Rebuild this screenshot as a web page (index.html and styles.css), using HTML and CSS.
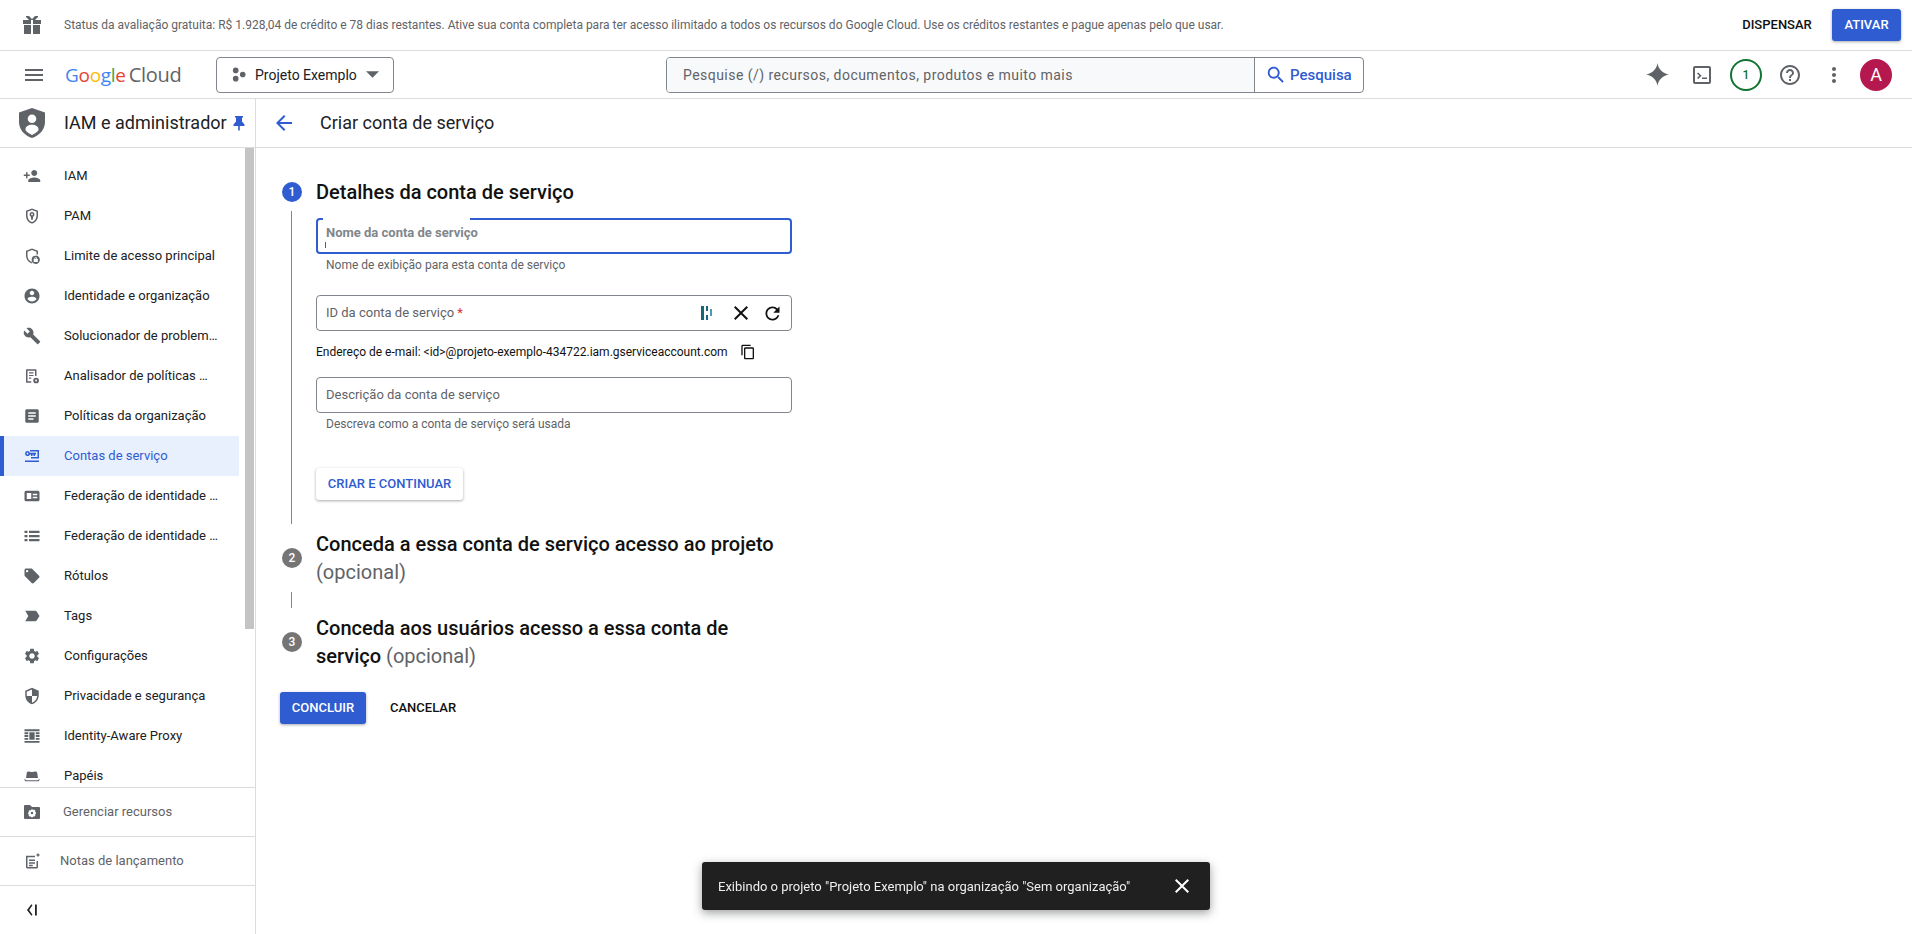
FILE: index.html
```html
<!DOCTYPE html>
<html lang="pt-BR">
<head>
<meta charset="utf-8">
<title>Criar conta de serviço</title>
<link rel="stylesheet" href="styles.css">
</head>
<body>
<div class="banner">
  <svg class="banner-gift" viewBox="0 0 18 18"><path d="M0 4h8v4H0zM10 4h8v4h-8zM1 9h7v9H1zM10 9h7v9h-7zM3 0h3l3 3 3-3h3v1l-3 3H6L3 1z"/></svg>
  <p class="banner-text">Status da avaliação gratuita: R$ 1.928,04 de crédito e 78 dias restantes. Ative sua conta completa para ter acesso ilimitado a todos os recursos do Google Cloud. Use os créditos restantes e pague apenas pelo que usar.</p>
  <button class="btn btn-text banner-dismiss">DISPENSAR</button>
  <button class="btn btn-primary banner-activate">ATIVAR</button>
</div>

<header class="topbar">
  <svg class="menu-icon" viewBox="0 0 24 24"><path d="M3 18h18v-2H3v2zm0-5h18v-2H3v2zm0-7v2h18V6H3z"/></svg>
  <div class="logo"><span class="g-blue">G</span><span class="g-red">o</span><span class="g-yellow">o</span><span class="g-blue">g</span><span class="g-green">l</span><span class="g-red">e</span><span class="logo-cloud">Cloud</span></div>
  <button class="project">
    <svg class="project-dots" viewBox="0 0 16 16"><circle cx="5" cy="3.600" r="3"/><circle cx="5" cy="12.400" r="3"/><circle cx="12.500" cy="8" r="3"/></svg>
    <span>Projeto Exemplo</span>
    <svg class="project-caret" viewBox="0 0 12 6"><path d="M0 0h12L6 6z"/></svg>
  </button>
  <div class="search">
    <div class="search-field">Pesquise (/) recursos, documentos, produtos e muito mais</div>
    <div class="search-btn">
      <svg viewBox="0 0 24 24"><path d="M15.500 14h-.79l-.28-.27C15.410 12.590 16 11.110 16 9.500 16 5.910 13.090 3 9.500 3S3 5.910 3 9.500 5.910 16 9.500 16c1.610 0 3.090-.59 4.230-1.570l.27.28v.79l5 4.990L20.490 19l-4.990-5zm-6 0C7.010 14 5 11.990 5 9.500S7.010 5 9.500 5 14 7.010 14 9.500 11.990 14 9.500 14z"/></svg>
      <span>Pesquisa</span>
    </div>
  </div>
  <div class="top-actions">
    <svg class="act act-spark" viewBox="0 0 24 24"><path d="M12 0c.9 6.300 5.200 10.900 12 12-6.800 1.100-11.100 5.700-12 12-.9-6.300-5.200-10.900-12-12C6.800 10.900 11.100 6.300 12 0z"/></svg>
    <svg class="act act-shell" viewBox="0 0 18 18"><path fill-rule="evenodd" d="M2 0h14a2 2 0 0 1 2 2v14a2 2 0 0 1-2 2H2a2 2 0 0 1-2-2V2a2 2 0 0 1 2-2zm0 2v14h14V2zm2 5.500L5.200 6.500 8.600 9.700 5.200 13 4 12l2.300-2.300zM9 11.500h5V13H9z"/></svg>
    <div class="act-badge">1</div>
    <svg class="act act-help" viewBox="0 0 24 24"><path d="M11 18h2v-2h-2v2zm1-16C6.480 2 2 6.480 2 12s4.480 10 10 10 10-4.480 10-10S17.520 2 12 2zm0 18c-4.410 0-8-3.590-8-8s3.590-8 8-8 8 3.590 8 8-3.590 8-8 8zm0-14c-2.210 0-4 1.790-4 4h2c0-1.100.9-2 2-2s2 .9 2 2c0 2-3 1.750-3 5h2c0-2.250 3-2.500 3-5 0-2.210-1.790-4-4-4z"/></svg>
    <svg class="act act-more" viewBox="0 0 24 24"><path d="M12 8c1.100 0 2-.9 2-2s-.9-2-2-2-2 .9-2 2 .9 2 2 2zm0 2c-1.100 0-2 .9-2 2s.9 2 2 2 2-.9 2-2-.9-2-2-2zm0 6c-1.100 0-2 .9-2 2s.9 2 2 2 2-.9 2-2-.9-2-2-2z"/></svg>
    <div class="avatar">A</div>
  </div>
</header>

<div class="shell">
  <aside class="sidebar">
    <div class="side-head">
      <svg class="side-shield" viewBox="0 0 26 30"><path fill-rule="evenodd" d="M13 0l13 4.500V14c0 7.500-5.500 13.500-13 16C5.500 27.500 0 21.500 0 14V4.500zm0 6.500a4.300 4.300 0 1 0 0 8.600 4.300 4.300 0 0 0 0-8.600zm0 10.300c-3.800 0-6.500 2-6.500 4.200v1.300c1.700 2 4 3.700 6.500 4.700 2.500-1 4.800-2.700 6.500-4.700V21c0-2.200-2.700-4.200-6.500-4.200z"/></svg>
      <span class="side-title">IAM e administrador</span>
      <svg class="side-pin" viewBox="0 0 12 15"><path d="M2 0h8v1.500H9V5.500l2.500 3V10H6.800v4L6 15l-.8-1v-4H.5V8.500L3 5.500V1.500H2z"/></svg>
    </div>
    <div class="nav-wrap">
      <nav class="nav">
        <a class="nav-item"><svg viewBox="0 0 24 24"><path d="M15 12c2.210 0 4-1.790 4-4s-1.790-4-4-4-4 1.790-4 4 1.790 4 4 4zm-9-2V7H4v3H1v2h3v3h2v-3h3v-2H6zm9 4c-2.670 0-8 1.340-8 4v2h16v-2c0-2.660-5.330-4-8-4z"/></svg><span>IAM</span></a>
        <a class="nav-item"><svg viewBox="0 0 24 24"><path fill-rule="evenodd" d="M12 2l8 3v6.500c0 4.900-3.300 9.300-8 10.500-4.700-1.200-8-5.600-8-10.500V5zm0 2.100L6 6.400v5.100c0 3.900 2.500 7.300 6 8.400 3.500-1.100 6-4.500 6-8.400V6.400zM12 6.500a3.400 3.400 0 0 1 1.500 6.400l-.4 4.100h-2.200l-.4-4.100A3.400 3.400 0 0 1 12 6.500zm0 2.200a1.200 1.200 0 1 0 0 2.400 1.200 1.200 0 0 0 0-2.400z"/></svg><span>PAM</span></a>
        <a class="nav-item"><svg viewBox="0 0 24 24"><path d="M12 2l8 3v5h-2V6.400l-6-2.300-6 2.300v5.100c0 3.800 2.300 7 5.500 8.200l.8 2.200h-.3c-4.700-1.200-8-5.600-8-10.500V5z"/><path fill-rule="evenodd" d="M17 11.500a5.500 5.500 0 1 1 0 11 5.500 5.500 0 0 1 0-11zm0 2a1.800 1.800 0 0 0-1.800 1.800v.7h-1v4h5.600v-4h-1v-.7A1.800 1.800 0 0 0 17 13.500zm0 1.300c.4 0 .7.300.7.700v.5h-1.400v-.5c0-.4.300-.7.700-.7z"/></svg><span>Limite de acesso principal</span></a>
        <a class="nav-item"><svg viewBox="0 0 24 24"><path d="M12 2C6.480 2 2 6.480 2 12s4.480 10 10 10 10-4.480 10-10S17.520 2 12 2zm0 3c1.660 0 3 1.340 3 3s-1.340 3-3 3-3-1.340-3-3 1.340-3 3-3zm0 14.200c-2.500 0-4.710-1.280-6-3.220.03-1.990 4-3.080 6-3.080 1.990 0 5.970 1.090 6 3.080-1.290 1.940-3.500 3.220-6 3.220z"/></svg><span>Identidade e organização</span></a>
        <a class="nav-item"><svg viewBox="0 0 24 24"><path d="M22.700 19l-9.100-9.100c.9-2.300.4-5-1.500-6.900-2-2-5-2.400-7.400-1.300L9 6 6 9 1.600 4.700C.4 7.100.9 10.100 2.900 12.100c1.900 1.900 4.600 2.400 6.900 1.500l9.100 9.100c.4.4 1 .4 1.400 0l2.300-2.300c.5-.4.5-1.100.1-1.400z"/></svg><span>Solucionador de problem…</span></a>
        <a class="nav-item"><svg viewBox="0 0 24 24"><path d="M5 3h12a1 1 0 0 1 1 1v8h-2V5H6v14h5v2H5a1 1 0 0 1-1-1V4a1 1 0 0 1 1-1zm3 4h6v1.600H8zm0 3.500h6v1.600H8zM8 14h3v1.600H8z"/><path fill-rule="evenodd" d="M17.500 14.200a3.800 3.800 0 1 1 0 7.600 3.800 3.800 0 0 1 0-7.600zm0 2.600a1.200 1.200 0 1 0 0 2.400 1.200 1.200 0 0 0 0-2.400z"/></svg><span>Analisador de políticas …</span></a>
        <a class="nav-item"><svg viewBox="0 0 24 24"><path d="M19 3H5c-1.100 0-2 .9-2 2v14c0 1.100.9 2 2 2h14c1.100 0 2-.9 2-2V5c0-1.100-.9-2-2-2zm-5 14H7v-2h7v2zm3-4H7v-2h10v2zm0-4H7V7h10v2z"/></svg><span>Políticas da organização</span></a>
        <a class="nav-item nav-active"><svg viewBox="0 0 14 12"><path fill-rule="evenodd" d="M0 10.500h14V12H0zM5 0h9v8.500H6V7h6.500V1.500H5zM2.500 1a2.500 2.500 0 0 1 2.400 1.800H11v1.600h-1V6H8.500V4.400h-1V6H6V4.400H4.900A2.500 2.500 0 1 1 2.500 1zm0 1.600a.9.9 0 1 0 0 1.800.9.9 0 0 0 0-1.800z"/></svg><span>Contas de serviço</span></a>
        <a class="nav-item"><svg viewBox="0 0 24 24"><path fill-rule="evenodd" d="M4 5h16a2 2 0 0 1 2 2v10a2 2 0 0 1-2 2H4a2 2 0 0 1-2-2V7a2 2 0 0 1 2-2zm1 3v8h6V8zm8 1v2h6V9zm0 4v2h6v-2z"/></svg><span>Federação de identidade …</span></a>
        <a class="nav-item"><svg viewBox="0 0 24 24"><path d="M2 5h4v3H2zm6 0h14v3H8zM2 10.500h4v3H2zm6 0h14v3H8zM2 16h4v3H2zm6 0h14v3H8z"/></svg><span>Federação de identidade …</span></a>
        <a class="nav-item"><svg viewBox="0 0 24 24"><path d="M21.410 11.580l-9-9C12.050 2.220 11.550 2 11 2H4c-1.100 0-2 .9-2 2v7c0 .55.22 1.050.59 1.420l9 9c.36.36.86.58 1.410.58.55 0 1.050-.22 1.410-.59l7-7c.37-.36.59-.86.59-1.410 0-.55-.23-1.060-.59-1.420zM5.500 7C4.670 7 4 6.330 4 5.500S4.670 4 5.500 4 7 4.670 7 5.500 6.330 7 5.500 7z"/></svg><span>Rótulos</span></a>
        <a class="nav-item"><svg viewBox="0 0 24 24"><path d="M3 5h13.500c.7 0 1.300.3 1.700.9L22 12l-3.800 6.100c-.4.6-1 .9-1.700.9H3l4-7z"/></svg><span>Tags</span></a>
        <a class="nav-item"><svg viewBox="0 0 24 24"><path d="M19.140 12.940c.04-.3.06-.61.06-.94 0-.32-.02-.64-.07-.94l2.030-1.580c.18-.14.23-.41.12-.61l-1.920-3.320c-.12-.22-.37-.29-.59-.22l-2.390.96c-.5-.38-1.030-.7-1.620-.94l-.36-2.540c-.04-.24-.24-.41-.48-.41h-3.840c-.24 0-.43.17-.47.41l-.36 2.540c-.59.24-1.130.57-1.620.94l-2.390-.96c-.22-.08-.47 0-.59.22L2.740 8.870c-.12.21-.08.47.12.61l2.030 1.580c-.05.3-.09.63-.09.94s.02.64.07.94l-2.030 1.580c-.18.14-.23.41-.12.61l1.920 3.320c.12.22.37.29.59.22l2.390-.96c.5.38 1.030.7 1.620.94l.36 2.540c.05.24.24.41.48.41h3.840c.24 0 .44-.17.47-.41l.36-2.540c.59-.24 1.130-.56 1.620-.94l2.390.96c.22.08.47 0 .59-.22l1.920-3.320c.12-.22.07-.47-.12-.61l-2.010-1.580zM12 15.600c-1.980 0-3.600-1.620-3.600-3.600s1.620-3.600 3.600-3.600 3.600 1.620 3.600 3.600-1.620 3.600-3.600 3.600z"/></svg><span>Configurações</span></a>
        <a class="nav-item"><svg viewBox="0 0 24 24"><path d="M12 1L3 5v6c0 5.550 3.840 10.740 9 12 5.160-1.260 9-6.450 9-12V5l-9-4zm0 10.990h7c-.53 4.120-3.280 7.790-7 8.940V12H5V6.300l7-3.110v8.800z"/></svg><span>Privacidade e segurança</span></a>
        <a class="nav-item"><svg viewBox="0 0 24 24"><path d="M2 3h20v2.500H2zm0 15.500h20V21H2zM2 7h5v2.500H2zm0 3.700h5v2.500H2zm0 3.800h5V17H2zM17 7h5v2.500h-5zm0 3.700h5v2.500h-5zm0 3.800h5V17h-5zM8.500 7h7v10h-7z"/></svg><span>Identity-Aware Proxy</span></a>
        <a class="nav-item"><svg viewBox="0 0 24 24"><path d="M7 6c1.500 0 3.500.8 5 .8S15.500 6 17 6c1.200 0 1.800 1 2 2l1 6.500H4L5 8c.2-1 .8-2 2-2zM2 15.500c1.500 1.500 3 2 3 2h14s1.500-.5 3-2c.5 2-1 3.500-3 3.500H5c-2 0-3.500-1.500-3-3.500z"/></svg><span>Papéis</span></a>
      </nav>
      <div class="nav-rail"></div>
    </div>
    <div class="side-foot foot-manage">
      <svg viewBox="0 0 16 14"><path fill-rule="evenodd" d="M1 0h5l2 2h7a1 1 0 0 1 1 1v10a1 1 0 0 1-1 1H1a1 1 0 0 1-1-1V1a1 1 0 0 1 1-1zm7.900 4.500H7.100l-.3 1.100-1-.6-1.200 1.200.6 1-1.100.3v1.800l1.100.3-.6 1 1.200 1.200 1-.6.3 1.100h1.800l.3-1.100 1 .6 1.200-1.200-.6-1 1.100-.3V7l-1.100-.3.6-1L10.200 4.500l-1 .6z"/><circle cx="8" cy="8" r="1.200"/></svg>
      <span>Gerenciar recursos</span>
    </div>
    <div class="side-foot foot-notes">
      <svg viewBox="0 0 24 24"><path d="M4 5h12v2H6v13h12v-8h2v8a2 2 0 0 1-2 2H6a2 2 0 0 1-2-2zm4 5h8v2H8zm0 3.500h8v2H8zM8 17h5v2H8zM20 1l.9 2.100L23 4l-2.100.9L20 7l-.9-2.100L17 4l2.100-.9z"/></svg>
      <span>Notas de lançamento</span>
    </div>
    <div class="side-foot foot-collapse">
      <svg viewBox="0 0 10 12"><path d="M5.500 1.300L4.400.3 0 6l4.400 5.700 1.100-1L2.200 6zM8 .5h1.800v11H8z"/></svg>
    </div>
  </aside>

  <main class="main">
    <div class="page-head">
      <svg class="back" viewBox="0 0 24 24"><path d="M20 11H7.830l5.590-5.590L12 4l-8 8 8 8 1.410-1.410L7.830 13H20v-2z"/></svg>
      <h1 class="page-title">Criar conta de serviço</h1>
    </div>
    <div class="content">
      <div class="step-head">
        <div class="step-num step-num-on">1</div>
        <h2 class="step-title">Detalhes da conta de serviço</h2>
      </div>
      <div class="step-body">
        <div class="field field-focus">
          <span class="notch"></span>
          <span class="float-label">Nome da conta de serviço</span>
          <span class="caret"></span>
        </div>
        <p class="hint">Nome de exibição para esta conta de serviço</p>
        <div class="field field-id">
          <span class="field-label">ID da conta de serviço <b class="req">*</b></span>
          <svg class="ico-bars" viewBox="0 0 12 14"><path class="bar-a" d="M0 0h3v14H0z"/><path class="bar-b" d="M5 0h2v5H5zM5 9h2v5H5z"/><path class="bar-c" d="M9 3h2v7H9z"/></svg>
          <svg class="ico-x" viewBox="0 0 24 24"><path d="M19 6.410L17.590 5 12 10.590 6.410 5 5 6.410 10.590 12 5 17.590 6.410 19 12 13.410 17.590 19 19 17.590 13.410 12z"/></svg>
          <svg class="ico-refresh" viewBox="0 0 24 24"><path d="M17.650 6.350C16.200 4.900 14.210 4 12 4c-4.420 0-7.990 3.580-7.990 8s3.570 8 7.990 8c3.730 0 6.840-2.550 7.730-6h-2.080c-.82 2.330-3.040 4-5.650 4-3.310 0-6-2.690-6-6s2.690-6 6-6c1.660 0 3.140.69 4.220 1.780L13 11h7V4l-2.350 2.350z"/></svg>
        </div>
        <div class="email-row">
          <span>Endereço de e-mail: &lt;id&gt;@projeto-exemplo-434722.iam.gserviceaccount.com</span>
          <svg viewBox="0 0 24 24"><path d="M16 1H4c-1.100 0-2 .9-2 2v14h2V3h12V1zm3 4H8c-1.100 0-2 .9-2 2v14c0 1.100.9 2 2 2h11c1.100 0 2-.9 2-2V7c0-1.100-.9-2-2-2zm0 16H8V7h11v14z"/></svg>
        </div>
        <div class="field field-desc"><span class="field-label">Descrição da conta de serviço</span></div>
        <p class="hint">Descreva como a conta de serviço será usada</p>
        <button class="btn btn-raised">CRIAR E CONTINUAR</button>
      </div>

      <div class="step-head step-two">
        <div class="step-num">2</div>
        <h2 class="step-title">Conceda a essa conta de serviço acesso ao projeto <span class="opt">(opcional)</span></h2>
      </div>
      <div class="connector"></div>
      <div class="step-head step-three">
        <div class="step-num">3</div>
        <h2 class="step-title">Conceda aos usuários acesso a essa conta de serviço <span class="opt">(opcional)</span></h2>
      </div>

      <div class="form-actions">
        <button class="btn btn-primary btn-done">CONCLUIR</button>
        <button class="btn btn-text btn-cancel">CANCELAR</button>
      </div>
    </div>
  </main>
</div>

<div class="toast">
  <span>Exibindo o projeto "Projeto Exemplo" na organização "Sem organização"</span>
  <svg viewBox="0 0 24 24"><path d="M19 6.410L17.590 5 12 10.590 6.410 5 5 6.410 10.590 12 5 17.590 6.410 19 12 13.410 17.590 19 19 17.590 13.410 12z"/></svg>
</div>
</body>
</html>
```
FILE: styles.css
```css
* { box-sizing: border-box; }
html, body { margin: 0; height: 100%; overflow: hidden; }
body { font-family: Roboto, "Liberation Sans", sans-serif; color: #202124; background: #fff; display: flex; flex-direction: column; -webkit-font-smoothing: antialiased; }
p, h1, h2 { margin: 0; font-weight: inherit; }
svg { display: block; flex: none; fill: currentColor; }
button { font-family: inherit; border: 0; background: none; padding: 0; }

.btn { font-size: 13px; font-weight: 500; height: 32px; border-radius: 2px; padding-bottom: 1px; }
.btn-primary { background: #2f5cd1; color: #fff; box-shadow: 0 1px 3px rgba(60,64,67,.45); border-radius: 3px; }
.btn-text { color: #111; }

.banner { height: 51px; flex: none; display: flex; align-items: center; border-bottom: 1px solid #dadce0; padding-right: 11px; }
.banner-gift { width: 18px; height: 18px; margin-left: 23px; color: #5f6368; }
.banner-text { margin-left: 23px; font-size: 12px; color: #5f6368; flex: 1; }
.banner-dismiss { width: 70px; margin-right: 20px; }
.banner-activate { width: 69px; }

.topbar { height: 48px; flex: none; display: flex; align-items: center; border-bottom: 1px solid #dadce0; }
.menu-icon { width: 24px; height: 24px; margin-left: 22px; color: #5f6368; }
.logo { margin-left: 19px; width: 151px; font-size: 19px; letter-spacing: -.3px; font-family: "Open Sans", Roboto, sans-serif; white-space: nowrap; }
.g-blue { color: #4285f4; } .g-red { color: #ea4335; } .g-yellow { color: #fbbc05; } .g-green { color: #34a853; }
.logo-cloud { color: #5f6368; margin-left: 3px; font-size: 20px; }
.project { display: flex; align-items: center; width: 178px; height: 36px; border: 1px solid #80868b; border-radius: 4px; padding-left: 14px; font-size: 14px; color: #202124; }
.project-dots { width: 15px; height: 15px; color: #5f6368; margin-right: 9px; }
.project-caret { width: 13px; height: 7px; color: #5f6368; margin-left: 9px; }
.search { margin-left: 272px; width: 698px; height: 36px; display: flex; border: 1px solid #80868b; border-radius: 4px; overflow: hidden; }
.search-field { flex: 1; background: #f8f9fa; border-right: 1px solid #80868b; padding-left: 16px; font-size: 14px; letter-spacing: .46px; line-height: 34px; color: #5f6368; }
.search-btn { width: 108px; display: flex; align-items: center; padding-left: 10px; color: #2f5cd1; font-size: 15px; font-weight: 500; gap: 3px; }
.search-btn svg { width: 22px; height: 22px; }
.top-actions { flex: 1; display: flex; align-items: center; }
.act { color: #5f6368; }
.act-spark { width: 23px; height: 23px; margin-left: 282px; }
.act-shell { width: 18px; height: 18px; margin-left: 24px; }
.act-badge { width: 32px; height: 32px; margin-left: 19px; border: 2px solid #137333; border-radius: 50%; color: #137333; font-size: 12px; font-weight: 500; display: flex; align-items: center; justify-content: center; }
.act-help { width: 24px; height: 24px; margin-left: 16px; }
.act-more { width: 24px; height: 24px; margin-left: 20px; }
.avatar { width: 32px; height: 32px; margin-left: 14px; border-radius: 50%; background: #b5184f; color: #fff; font-size: 18px; display: flex; align-items: center; justify-content: center; }

.shell { flex: 1; min-height: 0; display: flex; }
.sidebar { width: 256px; flex: none; display: flex; flex-direction: column; border-right: 1px solid #dadce0; }
.side-head { height: 49px; flex: none; display: flex; align-items: center; border-bottom: 1px solid #dadce0; }
.side-shield { width: 26px; height: 30px; margin-left: 19px; color: #5f6368; }
.side-title { margin-left: 19px; padding-bottom: 2px; font-size: 18px; color: #202124; white-space: nowrap; }
.side-pin { width: 12px; height: 15px; margin-left: 6px; color: #2f5cd1; }

.nav-wrap { flex: 1; min-height: 0; display: flex; overflow: hidden; }
.nav { width: 239px; padding-top: 8px; flex: none; }
.nav-rail { width: 9px; height: 481px; margin-left: 6px; background: #c4c4c4; flex: none; }
.nav-item { height: 40px; display: flex; align-items: center; font-size: 13px; color: #202124; padding-left: 23px; white-space: nowrap; }
.nav-item span { padding-bottom: 2px; }
.nav-item svg { width: 18px; height: 18px; margin-right: 23px; color: #5f6368; }
.nav-active { background: #e8f0fe; color: #2f5cd1; box-shadow: inset 4px 0 0 #2f5cd1; }
.nav-active svg { color: #2f5cd1; width: 14px; height: 12px; margin: 0 25px 0 2px; }

.side-foot { height: 49px; flex: none; display: flex; align-items: center; border-top: 1px solid #dadce0; font-size: 13px; color: #5f6368; }
.side-foot span { padding-bottom: 2px; }
.foot-manage svg { width: 16px; height: 14px; margin-left: 24px; margin-right: 23px; }
.foot-notes svg { width: 18px; height: 18px; margin-left: 23px; margin-right: 19px; }
.foot-collapse svg { width: 10px; height: 12px; margin-left: 27px; color: #202124; }

.main { flex: 1; min-width: 0; display: flex; flex-direction: column; }
.page-head { height: 49px; flex: none; display: flex; align-items: center; border-bottom: 1px solid #dadce0; }
.back { width: 24px; height: 24px; margin-left: 16px; color: #2f5cd1; }
.page-title { margin-left: 24px; padding-bottom: 2px; font-size: 18px; color: #202124; }

.content { padding: 30px 0 0 24px; }
.step-head { display: flex; align-items: center; }
.step-num { width: 20px; height: 20px; margin: 0 14px 0 2px; flex: none; border-radius: 50%; background: #757575; color: #fff; font-size: 12px; font-weight: 500; display: flex; align-items: center; justify-content: center; }
.step-num-on { background: #2f5cd1; }
.step-title { width: 476px; font-size: 20px; line-height: 28px; font-weight: 500; color: #111; }
.opt { font-weight: 400; color: #5f6368; }

.step-body { margin: 5px 0 0 11px; padding: 7px 0 24px 24px; border-left: 1px solid #80868b; }
.field { position: relative; width: 476px; height: 36px; border: 1px solid #80868b; border-radius: 4px; display: flex; align-items: center; padding: 0 8px 0 9px; font-size: 14px; }
.field-focus { border: 2px solid #2f5cd1; }
.notch { position: absolute; left: 5px; top: -2px; width: 147px; height: 2px; background: #fff; }
.float-label { font-size: 13px; font-weight: 700; color: #80868b; margin-top: -8px; margin-left: -1px; }
.caret { position: absolute; left: 7px; bottom: 4px; width: 1px; height: 6px; background: #2f5cd1; }
.field-label { color: #5f6368; font-size: 13px; flex: 1; padding-bottom: 1px; }
.req { color: #d93025; font-weight: 400; }
.hint { font-size: 12px; line-height: 16px; color: #5f6368; padding-left: 10px; margin-top: 3px; }
.field-id { margin-top: 22px; }
.ico-bars { width: 12px; height: 14px; margin-right: 16px; }
.bar-a, .bar-b { fill: #17697a; } .bar-c { fill: #4a9cb0; }
.ico-x { width: 24px; height: 24px; color: #111; margin-right: 9px; }
.ico-refresh { width: 21px; height: 21px; color: #111; }
.email-row { display: flex; align-items: center; margin-top: 13px; height: 16px; font-size: 12px; color: #111; }
.email-row svg { width: 16px; height: 16px; margin-left: 12px; }
.field-desc { margin-top: 17px; }
.btn-raised { display: block; margin-top: 36px; width: 147px; color: #2f5cd1; box-shadow: 0 1px 3px rgba(60,64,67,.45); background: #fff; border-radius: 3px; }

.step-two { margin-top: 6px; }
.connector { margin: 6px 0 0 11px; width: 1px; height: 16px; background: #80868b; }
.step-three { margin-top: 6px; }
.form-actions { display: flex; margin-top: 22px; }
.btn-done { width: 86px; }
.btn-cancel { width: 66px; margin-left: 24px; }

.toast { position: fixed; left: 702px; bottom: 24px; width: 508px; height: 48px; display: flex; align-items: center; justify-content: space-between; padding: 0 16px; background: #202020; color: #eee; font-size: 13px; border-radius: 3px; box-shadow: 0 3px 10px rgba(60,64,67,.5); }
.toast svg { width: 24px; height: 24px; color: #fff; }
```
